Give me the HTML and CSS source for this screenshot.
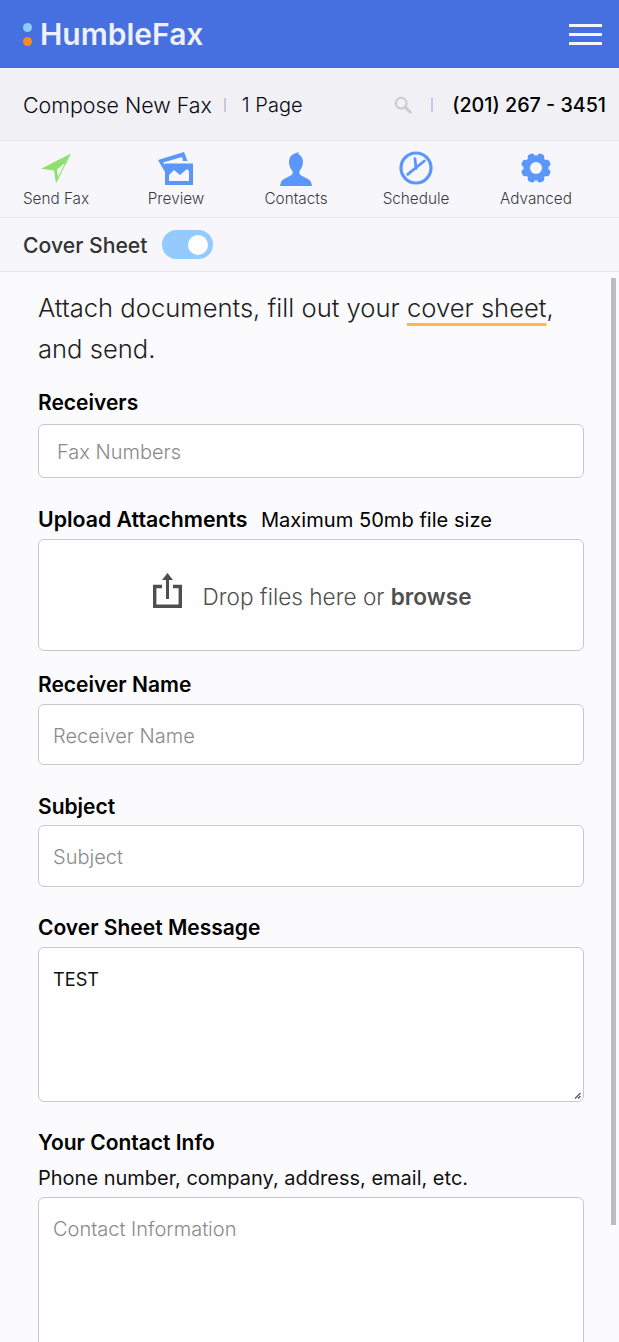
FILE: index.html
```html
<!DOCTYPE html>
<html lang="en">
<head>
<meta charset="utf-8">
<title>HumbleFax</title>
<link rel="stylesheet" href="styles.css">
</head>
<body>
<div class="page">
  <header class="topbar">
    <div class="logo">
      <span class="dots"><i class="dot dot-blue"></i><i class="dot dot-orange"></i></span>
      <span class="logo-text">HumbleFax</span>
    </div>
    <div class="burger"><i></i><i></i><i></i></div>
  </header>
  <div class="infobar">
    <span class="title">Compose New Fax</span>
    <span class="sep"></span>
    <span class="pages">1 Page</span>
    <svg class="search" width="18" height="18" viewBox="0 0 18 18"><circle cx="7.200" cy="7.200" r="5.400" fill="none" stroke="#ccc" stroke-width="2"/><path d="M11 11l5.200 5" stroke="#ccc" stroke-width="3" stroke-linecap="round"/></svg>
    <span class="sep sep-b"></span>
    <span class="phone">(201) 267 - 3451</span>
  </div>
  <nav class="tools">
    <div class="tool tool-first">
      <div class="ico"><svg width="32" height="31" viewBox="0 0 32 31"><path fill="#8fe070" fill-rule="evenodd" d="M31 .5L1 15.700 14 17.500l2 13zM25 10l-8 6.500 1 7.500z"/></svg></div>
      <span>Send Fax</span>
    </div>
    <div class="tool">
      <div class="ico"><svg width="36" height="34" viewBox="0 0 36 34"><path fill="#5b97fb" d="M0 9L26 1l3.500 9H25l-.8-4L5 11.500 7 14v7z"/><path fill="#5b97fb" fill-rule="evenodd" d="M7 12.500h28V34H7zM11 30h20V20l-2-2-7 6-6-5-5 5z"/></svg></div>
      <span>Preview</span>
    </div>
    <div class="tool">
      <div class="ico"><svg width="32" height="35" viewBox="0 0 32 35"><path fill="#5b97fb" d="M16 2l3-1-1 2c3 1 5 4 5 8s-2 7-3.500 9v3c2.500 3 9.500 4 11.500 8l1 4H0l1-4c2-4 9-5 11.500-8v-3C10.500 18 9 15 9 11c0-5 3-8 7-9z"/></svg></div>
      <span>Contacts</span>
    </div>
    <div class="tool">
      <div class="ico"><svg width="34" height="34" viewBox="0 0 34 34"><circle cx="17" cy="17" r="15" fill="none" stroke="#5b97fb" stroke-width="3.200"/><path d="M8.700 23.300L25.300 10M16 7.700l1 10" fill="none" stroke="#5b97fb" stroke-width="2.800" stroke-linecap="round"/></svg></div>
      <span>Schedule</span>
    </div>
    <div class="tool">
      <div class="ico"><svg width="30" height="30" viewBox="-15 -15 30 30"><circle r="12.500" fill="#5b97fb"/><g fill="#5b97fb"><rect x="-3.500" y="-15" width="7" height="30" rx="2.500" transform="rotate(22.500)"/><rect x="-3.500" y="-15" width="7" height="30" rx="2.500" transform="rotate(67.500)"/><rect x="-3.500" y="-15" width="7" height="30" rx="2.500" transform="rotate(112.500)"/><rect x="-3.500" y="-15" width="7" height="30" rx="2.500" transform="rotate(157.500)"/></g><circle r="6" fill="#f7f7fb"/></svg></div>
      <span>Advanced</span>
    </div>
  </nav>
  <div class="cover-row">
    <span class="cover-label">Cover Sheet</span>
    <span class="toggle"><i></i></span>
  </div>
  <main class="content">
    <h1 class="intro">Attach documents, fill out your <span class="mark">cover sheet</span>, and send.</h1>

    <label class="label lb-first">Receivers</label>
    <div class="field fax"><span class="ph">Fax Numbers</span></div>

    <div class="label lb-upload">Upload Attachments <span class="note">Maximum 50mb file size</span></div>
    <div class="drop">
      <svg class="drop-icon" width="29" height="35" viewBox="0 0 29 35"><path d="M9 13.500H1.700v19.800h25.600V13.500H20" fill="none" stroke="#4f4f4f" stroke-width="3.400"/><path d="M14.500 26V5" stroke="#4f4f4f" stroke-width="3"/><path d="M14.500 0L20 7H9z" fill="#4f4f4f"/></svg>
      <span class="drop-text">Drop files here or <b>browse</b></span>
    </div>

    <label class="label lb-name">Receiver Name</label>
    <div class="field"><span class="ph">Receiver Name</span></div>

    <label class="label lb-subject">Subject</label>
    <div class="field field-subject"><span class="ph">Subject</span></div>

    <label class="label lb-message">Cover Sheet Message</label>
    <div class="area message">TEST
      <svg class="grip" width="7" height="7" viewBox="0 0 7 7"><path d="M6.500 1L1 6.500M6.500 4L4 6.500" stroke="#555" stroke-width="1.200"/></svg>
    </div>

    <label class="label lb-contact">Your Contact Info</label>
    <div class="hint">Phone number, company, address, email, etc.</div>
    <div class="area contact"><span class="ph">Contact Information</span></div>
  </main>
  <div class="scrollthumb"></div>
</div>
</body>
</html>
```
FILE: styles.css
```css
* { box-sizing: border-box; }
html, body { margin: 0; padding: 0; height: 100%; overflow: hidden; }
body { font-family: Inter, "Liberation Sans", sans-serif; color: #000; background: #fbfbfe; }
.page { position: relative; width: 619px; height: 1342px; overflow: hidden; }

.topbar { height: 68px; background: #466fdf; display: flex; align-items: center; justify-content: space-between; padding: 0 17px 0 23px; }
.logo { display: flex; align-items: center; gap: 8px; }
.dots { display: flex; flex-direction: column; gap: 5px; }
.dot { display: block; width: 9px; height: 9px; border-radius: 50%; }
.dot-blue { background: #8fcbff; }
.dot-orange { background: #fb8b1e; }
.logo-text { font-size: 30px; font-weight: 600; color: #eef1fd; }
.burger { display: flex; flex-direction: column; gap: 6px; }
.burger i { display: block; width: 33px; height: 3px; background: #f4f6fe; }

.infobar { height: 73px; background: #f0f0f5; border-bottom: 1px solid #e6e6ea; display: flex; align-items: center; padding: 1px 13px 0 23px; }
.title { font-size: 21.400px; font-weight: 300; color: #0a0a14; }
.sep { width: 2px; height: 14px; background: #c9c9de; margin: 0 16px 0 12px; }
.pages { font-size: 20px; font-weight: 300; color: #0a0a14; }
.search { margin-left: auto; margin-right: -1px; }
.sep-b { margin: 0 19px 0 20px; }
.phone { font-size: 19.700px; font-weight: 500; }

.tools { height: 77px; background: #f7f7fb; border-bottom: 1px solid #e6e6ea; display: grid; grid-template-columns: 116px repeat(4, 120px); padding-top: 9px; }
.tool { display: flex; flex-direction: column; align-items: center; }
.tool-first { padding-right: 4px; }
.ico { height: 36px; display: flex; align-items: center; justify-content: center; }
.tool span { font-size: 15.300px; line-height: 18px; margin-top: 4px; font-weight: 300; color: #3a3a44; }

.cover-row { height: 54px; background: #f7f7fb; border-bottom: 1px solid #e6e6ea; display: flex; align-items: center; padding-left: 23px; gap: 14px; }
.cover-label { font-size: 21.200px; font-weight: 500; color: #333; }
.toggle { width: 51px; height: 29px; border-radius: 15px; background: #93caff; display: flex; align-items: center; justify-content: flex-end; padding-right: 5px; }
.toggle i { display: block; width: 20px; height: 20px; border-radius: 50%; background: #fff; }

.content { width: 584px; padding: 15px 0 0 38px; }
.intro { margin: 0; font-size: 25.600px; line-height: 41px; font-weight: 300; color: #222; width: 530px; }
.mark { text-decoration: underline; text-decoration-color: #fdb94f; text-decoration-thickness: 3px; text-underline-offset: 6px; text-decoration-skip-ink: none; }

.label { display: block; font-size: 21px; font-weight: 600; line-height: 26px; }
.lb-first { margin-top: 21px; margin-bottom: 8px; }
.lb-upload { margin-top: 28px; margin-bottom: 6px; font-size: 21.300px; }
.lb-name { margin-top: 21px; margin-bottom: 6px; }
.lb-subject { margin-top: 29px; margin-bottom: 5px; }
.lb-message { margin-top: 28px; margin-bottom: 6px; }
.lb-contact { margin-top: 28px; margin-bottom: 9px; }
.note { font-size: 20.100px; font-weight: 400; margin-left: 8px; }

.field { height: 61px; background: #fff; border: 1px solid #c9c9c9; border-radius: 6px; display: flex; align-items: center; padding: 2px 0 0 14px; }
.field-subject { height: 62px; }
.fax { height: 54px; padding-left: 18px; }
.ph { font-size: 20px; font-weight: 300; color: #8a8a8a; }
.drop { height: 112px; background: #fff; border: 1px solid #c9c9c9; border-radius: 6px; display: flex; align-items: center; justify-content: center; gap: 21px; padding-left: 2px; font-size: 22.600px; font-weight: 300; color: #4f4f4f; }
.drop-icon { margin-bottom: 10px; }
.drop-text { padding-top: 2px; }
.drop b { font-weight: 600; }
.area { position: relative; background: #fff; border: 1px solid #c9c9c9; border-radius: 6px; padding: 19px 14px; font-size: 18.200px; line-height: 24px; font-weight: 400; color: #111; }
.message { height: 155px; }
.contact { height: 170px; }
.grip { position: absolute; right: 2px; bottom: 2px; }
.hint { font-size: 20px; font-weight: 400; line-height: 26px; margin-bottom: 6px; color: #111; }
.scrollthumb { position: absolute; left: 611px; top: 278px; width: 5px; height: 947px; background: #bdbdbd; }
```
